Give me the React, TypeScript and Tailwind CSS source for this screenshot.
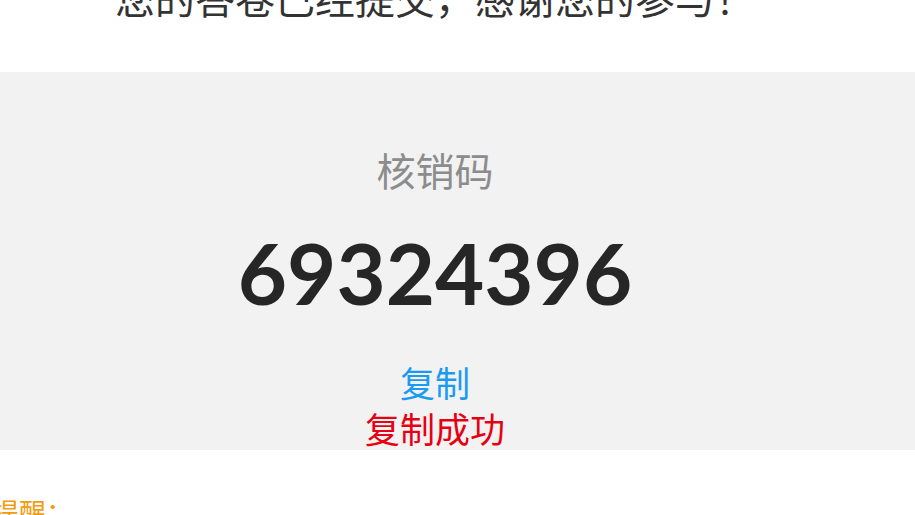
export default function App() {
  const code = '69324396'
  return (
    <div className="w-[915px] h-[515px] overflow-hidden bg-white" style={{ fontFamily: '"Noto Sans CJK SC", "Noto Sans", sans-serif' }}>
      {/* page is scrolled: the heading sits partly above the viewport */}
      <div className="-mt-[28px]">
        <div className="w-[870px] flex justify-center pb-[50px]">
          <p className="text-[40px] leading-[50px] text-[#333333]">您的答卷已经提交，感谢您的参与！</p>
        </div>

        {/* Verification code block */}
        <div className="w-full bg-[#f2f2f2]">
          <div className="w-[870px] flex flex-col items-center pt-[77px] pb-[2px]">
            <span className="text-[39px] leading-[40px] text-[#8c8c8c]">核销码</span>
            <span
              className="mt-[41px] text-[85px] leading-none font-bold text-[#262626]"
              style={{ fontFamily: 'Lato, "Noto Sans", sans-serif' }}
            >
              {code}
            </span>
            <button className="mt-[47px] text-[35px] leading-[40px] text-[#1a9bf0]">复制</button>
            <span className="mt-[6px] text-[35px] leading-[40px] text-[#e60012]">复制成功</span>
          </div>
        </div>

        {/* Notice */}
        <div className="pt-[45px] -ml-[8px]">
          <span className="text-[27px] leading-[34px] text-[#f39c12]">提醒：</span>
        </div>
      </div>
    </div>
  )
}
